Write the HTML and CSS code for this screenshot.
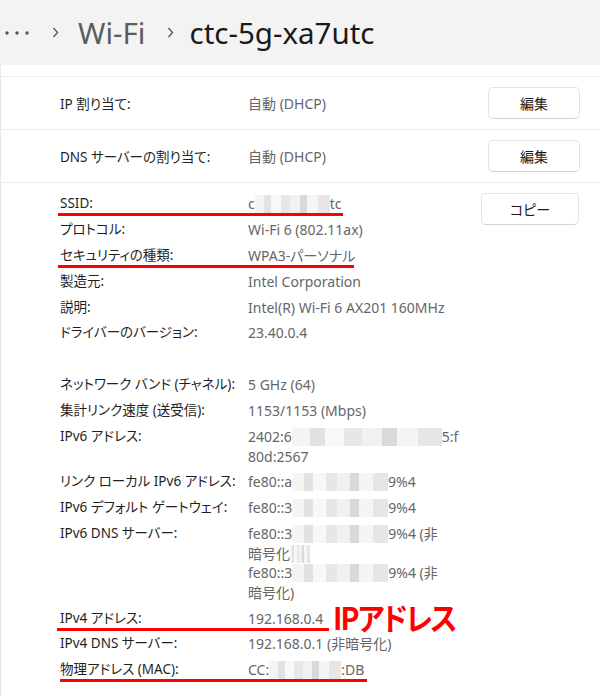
FILE: index.html
```html
<!DOCTYPE html>
<html lang="ja">
<head>
<meta charset="utf-8">
<title>Wi-Fi</title>
<link rel="stylesheet" href="styles.css">
</head>
<body>
<header class="crumbs">
  <svg class="dots" width="24" height="6" viewBox="0 0 24 6"><circle cx="2" cy="3" r="1.7"/><circle cx="12" cy="3" r="1.7"/><circle cx="22" cy="3" r="1.7"/></svg>
  <svg class="chev" width="7" height="11" viewBox="0 0 7 11"><polyline points="1.5,1 5.5,5.5 1.5,10"/></svg>
  <span class="crumb">Wi-Fi</span>
  <svg class="chev chev2" width="7" height="11" viewBox="0 0 7 11"><polyline points="1.5,1 5.5,5.5 1.5,10"/></svg>
  <span class="crumb current">ctc-5g-xa7utc</span>
</header>
<main class="card">
  <div class="top-strip"></div>
  <div class="setting">
    <span class="label">IP 割り当て:</span>
    <span class="value">自動 (DHCP)</span>
    <button class="btn">編集</button>
  </div>
  <div class="setting">
    <span class="label">DNS サーバーの割り当て:</span>
    <span class="value">自動 (DHCP)</span>
    <button class="btn">編集</button>
  </div>
  <section class="props">
    <div class="list">
      <div class="prop"><span class="k">SSID:</span><span class="v">c<span class="blur b-ssid"></span>tc</span><i class="mark m-ssid"></i></div>
      <div class="prop"><span class="k">プロトコル:</span><span class="v">Wi-Fi 6 (802.11ax)</span></div>
      <div class="prop"><span class="k">セキュリティの種類:</span><span class="v">WPA3-パーソナル</span><i class="mark m-sec"></i></div>
      <div class="prop"><span class="k">製造元:</span><span class="v">Intel Corporation</span></div>
      <div class="prop"><span class="k">説明:</span><span class="v">Intel(R) Wi-Fi 6 AX201 160MHz</span></div>
      <div class="prop"><span class="k">ドライバーのバージョン:</span><span class="v">23.40.0.4</span></div>
      <div class="spacer"></div>
      <div class="prop"><span class="k">ネットワーク バンド (チャネル):</span><span class="v">5 GHz (64)</span></div>
      <div class="prop"><span class="k">集計リンク速度 (送受信):</span><span class="v">1153/1153 (Mbps)</span></div>
      <div class="prop"><span class="k">IPv6 アドレス:</span><span class="v">2402:6<span class="blur b-v6"></span>5:f<br>80d:2567</span></div>
      <div class="prop"><span class="k">リンク ローカル IPv6 アドレス:</span><span class="v">fe80::a<span class="blur b-ll"></span>9%4</span></div>
      <div class="prop"><span class="k">IPv6 デフォルト ゲートウェイ:</span><span class="v">fe80::3<span class="blur b-ll"></span>9%4</span></div>
      <div class="prop"><span class="k">IPv6 DNS サーバー:</span><span class="v">fe80::3<span class="blur b-ll"></span>9%4 (非<br>暗号化<span class="blur b-tail"></span><br>fe80::3<span class="blur b-ll"></span>9%4 (非<br>暗号化)</span></div>
      <div class="prop"><span class="k">IPv4 アドレス:</span><span class="v">192.168.0.4</span><i class="mark m-v4"></i><b class="callout">IPアドレス</b></div>
      <div class="prop"><span class="k">IPv4 DNS サーバー:</span><span class="v">192.168.0.1 (非暗号化)</span></div>
      <div class="prop"><span class="k">物理アドレス (MAC):</span><span class="v">CC:<span class="blur b-mac"></span>:DB</span><i class="mark m-mac"></i></div>
    </div>
    <button class="btn copy">コピー</button>
  </section>
</main>
</body>
</html>
```

FILE: styles.css
```css
html, body {
  margin: 0;
  padding: 0;
}

body {
  background: #f3f3f3;
  font-family: "Noto Sans", "Noto Sans CJK JP", sans-serif;
  font-feature-settings: "palt";
  color: #1b1b1b;
  overflow: hidden;
}

.crumbs {
  height: 65px;
  display: flex;
  align-items: center;
  padding-left: 5px;
}

.dots {
  fill: #555;
  margin-right: 23px;
}

.chev {
  fill: none;
  stroke: #555;
  stroke-width: 1.3;
  margin-right: 19px;
}

.chev2 {
  margin-left: 22px;
  margin-right: 15px;
}

.crumb {
  font-size: 29.5px;
  line-height: 1;
  color: #5c5c5c;
}

.crumb.current {
  color: #1a1a1a;
}

.card {
  background: #fff;
  border-left: 1px solid #e6e6e6;
  min-height: 640px;
}

.top-strip {
  height: 11px;
  border-bottom: 1px solid #ededed;
}

.setting {
  display: flex;
  align-items: center;
  height: 52px;
  padding: 0 20px 0 59px;
  border-bottom: 1px solid #ededed;
  font-size: 13.5px;
}

.label {
  width: 188px;
  flex: none;
  color: #1f1f1f;
}

.value {
  color: #666;
  font-size: 14px;
}

.btn {
  font-family: inherit;
  font-feature-settings: "palt";
  font-size: 14px;
  color: #1b1b1b;
  background: #fff;
  border: 1px solid #e3e3e3;
  border-bottom-color: #d2d2d2;
  border-radius: 5px;
  height: 32px;
  width: 92px;
  padding: 0;
  margin-left: auto;
}

.props {
  display: flex;
  align-items: flex-start;
  padding: 11px 21px 20px 59px;
}

.list {
  display: flex;
  flex-direction: column;
  gap: 6.4px;
}

.prop {
  display: flex;
  position: relative;
  font-size: 13.5px;
  line-height: 19.5px;
}

.spacer {
  height: 19.5px;
}

.k {
  width: 188px;
  flex: none;
  color: #1f1f1f;
}

.v {
  color: #666;
  font-size: 14px;
  white-space: nowrap;
}

.copy {
  width: 98px;
  margin-top: -1px;
}

.blur {
  display: inline-block;
  height: 18px;
  vertical-align: -4px;
  background: linear-gradient(90deg, #f4f4f4 0 12%, #e2e2e2 12% 22%, #f8f8f8 22% 35%, #e7e7e7 35% 47%, #f1f1f1 47% 60%, #d9d9d9 60% 70%, #f5f5f5 70% 84%, #e6e6e6 84%);
}

.b-ssid { width: 75px; }
.b-v6 { width: 150px; }
.b-ll { width: 96px; }
.b-tail { width: 20px; }
.b-mac { width: 72px; }

.mark {
  position: absolute;
  height: 3px;
  background: #f00;
  top: 19px;
}

.m-ssid { left: -2px; width: 285px; }
.m-sec { left: -2px; width: 296px; }
.m-v4 { left: -3px; width: 272px; }
.m-mac { left: 0; width: 307px; }

.callout {
  position: absolute;
  left: 273px;
  top: -8px;
  white-space: nowrap;
  font-family: "Noto Sans CJK JP", sans-serif;
  font-size: 31px;
  font-weight: 700;
  line-height: 1;
  color: #f00;
  letter-spacing: -2px;
  transform: scaleX(0.92);
  transform-origin: left center;
}
```
